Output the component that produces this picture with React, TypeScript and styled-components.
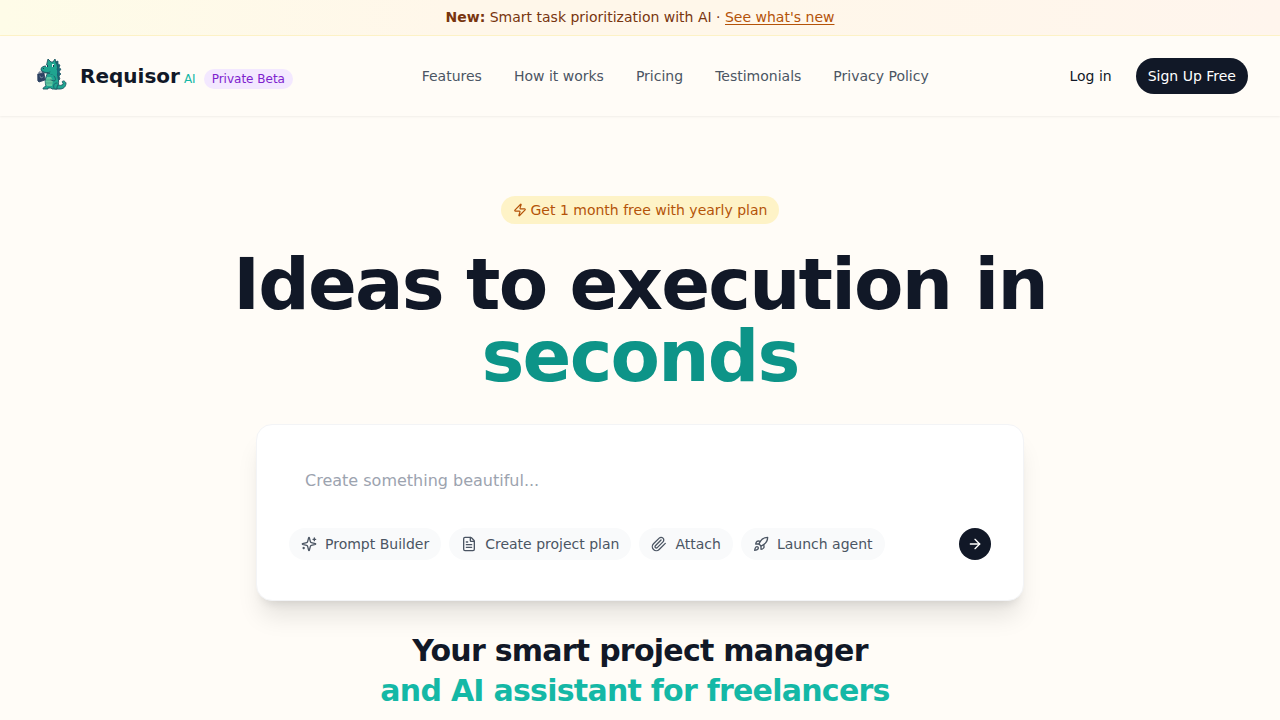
import React from "react";
import styled, { createGlobalStyle } from "styled-components";
import { ArrowRight, FileText, Zap } from "lucide-react";

const GlobalStyle = createGlobalStyle`
  *, *::before, *::after { box-sizing: border-box; }
  body {
    margin: 0;
    background: #fffcf7;
    color: #111827;
    font-family: "DejaVu Sans", sans-serif;
    font-size: 14px;
    line-height: 20px;
  }
  h1, h2, p { margin: 0; }
  button, textarea { font: inherit; border: 0; }
  button { cursor: pointer; }
  a { color: inherit; text-decoration: none; }
`;

const Page = styled.div`
  min-height: 100vh;
  overflow: hidden;
`;

const Announcement = styled.p`
  padding: 7px 16px 8px;
  text-align: center;
  color: #78350f;
  background: linear-gradient(to right, #fefce8, #fff7ea 35%, #fff7ea 60%, #fff5ed);
  border-bottom: 1px solid #fef3c7;

  a {
    color: #b45309;
    text-decoration: underline;
    text-underline-offset: 2px;
  }
`;

const Header = styled.header`
  display: flex;
  align-items: center;
  justify-content: space-between;
  padding: 20px 32px;
  box-shadow: 0 1px 2px rgba(0, 0, 0, 0.06);
`;

const Brand = styled.a`
  display: flex;
  align-items: center;
  gap: 8px;
`;

const BrandName = styled.span`
  padding-top: 2px;
  font-size: 20px;
  line-height: 28px;
  font-weight: 700;
`;

const BrandSuffix = styled.small`
  margin-left: 4px;
  color: #14b8a6;
  font-size: 12px;
  font-weight: 400;
`;

const BetaTag = styled.span`
  padding: 2px 8px;
  margin-top: 6px;
  border-radius: 16px;
  color: #7e22ce;
  background: #f3e8ff;
  font-size: 12px;
  line-height: 16px;
`;

const Nav = styled.nav`
  display: flex;
  gap: 32px;
  color: #4b5563;
`;

const Account = styled.div`
  display: flex;
  align-items: center;
  gap: 12px;
`;

const LogIn = styled.a`
  padding: 8px 12px;
`;

const SignUp = styled.button`
  padding: 8px 12px;
  border-radius: 24px;
  color: #fff;
  background: #111827;
`;

const Hero = styled.main`
  display: flex;
  flex-direction: column;
  align-items: center;
  padding: 80px 32px 64px;
`;

const Offer = styled.p`
  display: flex;
  align-items: center;
  gap: 4px;
  padding: 4px 12px;
  border-radius: 16px;
  color: #b45309;
  background: #fef3c7;
`;

const Title = styled.h1`
  max-width: 896px;
  margin-top: 24px;
  text-align: center;
  font-size: 72px;
  line-height: 72px;
  font-weight: 700;
  letter-spacing: -0.025em;

  span { color: #0d9488; }
`;

const PromptCard = styled.form`
  width: 100%;
  max-width: 768px;
  margin-top: 32px;
  padding: 32px 32px 40px;
  background: #fff;
  border: 1px solid #f3f4f6;
  border-radius: 16px;
  box-shadow: 0 20px 25px -5px rgba(0, 0, 0, 0.1), 0 8px 10px -6px rgba(0, 0, 0, 0.1);
`;

const PromptInput = styled.textarea`
  display: block;
  width: 100%;
  height: 56px;
  padding: 12px 16px;
  resize: none;
  outline: none;
  background: transparent;
  color: #111827;
  font-size: 16px;
  line-height: 24px;

  &::placeholder { color: #9ca3af; opacity: 1; }
`;

const Toolbar = styled.div`
  display: flex;
  flex-wrap: wrap;
  gap: 8px;
  margin-top: 15px;
`;

const ToolButton = styled.button`
  display: flex;
  align-items: center;
  gap: 8px;
  padding: 6px 12px;
  border-radius: 16px;
  color: #4b5563;
  background: #f9fafb;
`;

const SendButton = styled.button`
  display: grid;
  place-items: center;
  width: 32px;
  height: 32px;
  margin-left: auto;
  padding: 0;
  border-radius: 50%;
  color: #fff;
  background: #111827;
`;

const Subtitle = styled.h2`
  margin-top: 30px;
  text-align: center;
  font-size: 30px;
  line-height: 40px;
  font-weight: 700;
  letter-spacing: -0.025em;
`;

const SubtitleAccent = styled.span`
  display: block;
  padding-right: 10px;
  color: #14b8a6;
`;

const LineIcon = styled.svg.attrs({
  width: 16,
  height: 16,
  viewBox: "0 0 24 24",
  fill: "none",
  stroke: "currentColor",
  strokeWidth: 2,
  strokeLinecap: "round",
  strokeLinejoin: "round",
  "aria-hidden": true,
})``;

const SparklesIcon = () => (
  <LineIcon>
    <path d="M9.937 15.5A2 2 0 0 0 8.5 14.063l-6.135-1.582a.5.5 0 0 1 0-.962L8.5 9.936A2 2 0 0 0 9.937 8.5l1.582-6.135a.5.5 0 0 1 .963 0L14.063 8.5A2 2 0 0 0 15.5 9.937l6.135 1.581a.5.5 0 0 1 0 .964L15.5 14.063a2 2 0 0 0-1.437 1.437l-1.582 6.135a.5.5 0 0 1-.963 0z" />
    <path d="M20 3v4M22 5h-4M4 17v2M5 18H3" />
  </LineIcon>
);

const PaperclipIcon = () => (
  <LineIcon>
    <path d="m21.44 11.05-9.19 9.19a6 6 0 0 1-8.49-8.49l8.57-8.57A4 4 0 1 1 18 8.84l-8.59 8.57a2 2 0 0 1-2.83-2.83l8.49-8.48" />
  </LineIcon>
);

const RocketIcon = () => (
  <LineIcon>
    <path d="M4.5 16.5c-1.5 1.26-2 5-2 5s3.74-.5 5-2c.71-.84.7-2.13-.09-2.91a2.18 2.18 0 0 0-2.91-.09z" />
    <path d="m12 15-3-3a22 22 0 0 1 2-3.95A12.88 12.88 0 0 1 22 2c0 2.72-.78 7.5-6 11a22.35 22.35 0 0 1-4 2z" />
    <path d="M9 12H4s.55-3.03 2-4c1.62-1.08 5 0 5 0M12 15v5s3.03-.55 4-2c1.08-1.62 0-5 0-5" />
  </LineIcon>
);

const PlanIcon = () => <FileText size={16} />;

const DragonLogo = () => (
  <svg width="40" height="40" viewBox="0 0 40 40" aria-hidden="true">
    <g stroke="#1d5562" strokeLinejoin="round" strokeLinecap="round">
      <path fill="#1fa590" strokeWidth=".9" d="M24 27c2 2 4 3 6 2 2-1 1-2 0-3 1-2 3-1 4 1 0 4-3 6-6 6h-5z" />
      <path fill="#17697a" strokeWidth=".7" d="M23 6l3-1v3l2 1-1 3 2 1-2 3 2 2-2 2 1 3-2 2-4-3z" />
      <path fill="#1fa590" strokeWidth=".9" d="M17 14c6-1 9 3 9 8 1 3 1 6-1 9v2h-5l-1-1h-3v1h-5c0-2 2-2 3-3-1-3-1-6 0-9z" />
      <path fill="#1fa590" strokeWidth=".9" d="M15 7l1-4 3 3h2l2-3 1 4c2 2 2 6 0 9l-4 2-5-1c-3 0-5-1-6-3 0-3 2-4 5-4z" />
    </g>
    <path fill="#1fa590" d="M17 14h8v4h-7z" />
    <path fill="#62c6a0" d="M15 21c-2 3-2 7 0 9h5c1-3 1-6-1-9z" />
    <g fill="none" stroke="#1d5562" strokeLinejoin="round" strokeLinecap="round">
      <path stroke="#33987f" strokeWidth=".6" d="M14 24h5M14 27h6" />
      <path strokeWidth=".8" d="M10 15c3 2 6 2 8 1M22 20c2 2 2 5 0 5l-3-1M25 27c-3 0-4 2-3 5" />
      <path fill="#2d4262" stroke="#22385a" strokeWidth=".8" d="M6 18l6-1 1 7-6 2-1-1z" />
      <path stroke="#22385a" strokeWidth=".7" d="M7 17v-1h3l1 1" />
      <path stroke="#8b9fb0" strokeWidth=".7" d="M8 20l1 2 2-1" />
    </g>
    <path fill="#d9efea" d="M20 8h2v3h-2zM14 9h1v2h-1z" />
    <path fill="#173a55" d="M21 9h1v2h-1zM15 9h1v2h-1zM11 12h1v1h-1z" />
  </svg>
);

const links = ["Features", "How it works", "Pricing", "Testimonials", "Privacy Policy"];

const tools = [
  { label: "Prompt Builder", Icon: SparklesIcon },
  { label: "Create project plan", Icon: PlanIcon },
  { label: "Attach", Icon: PaperclipIcon },
  { label: "Launch agent", Icon: RocketIcon },
];

export default function App() {
  return (
    <Page>
      <GlobalStyle />
      <Announcement>
        <strong>New:</strong> Smart task prioritization with AI · <a href="#new">See what's new</a>
      </Announcement>
      <Header>
        <Brand href="#home">
          <DragonLogo />
          <BrandName>
            Requisor
            <BrandSuffix>AI</BrandSuffix>
          </BrandName>
          <BetaTag>Private Beta</BetaTag>
        </Brand>
        <Nav>
          {links.map((label) => (
            <a key={label} href={"#" + label.toLowerCase().replace(/ /g, "-")}>{label}</a>
          ))}
        </Nav>
        <Account>
          <LogIn href="#login">Log in</LogIn>
          <SignUp type="button">Sign Up Free</SignUp>
        </Account>
      </Header>
      <Hero>
        <Offer>
          <Zap size={14} />
          Get 1 month free with yearly plan
        </Offer>
        <Title>
          Ideas to execution in <span>seconds</span>
        </Title>
        <PromptCard onSubmit={(event) => event.preventDefault()}>
          <PromptInput aria-label="Project prompt" placeholder="Create something beautiful..." />
          <Toolbar>
            {tools.map(({ label, Icon }) => (
              <ToolButton key={label} type="button">
                <Icon />
                {label}
              </ToolButton>
            ))}
            <SendButton type="submit" aria-label="Send">
              <ArrowRight size={16} />
            </SendButton>
          </Toolbar>
        </PromptCard>
        <Subtitle>
          Your smart project manager
          <SubtitleAccent>and AI assistant for freelancers</SubtitleAccent>
        </Subtitle>
      </Hero>
    </Page>
  );
}
